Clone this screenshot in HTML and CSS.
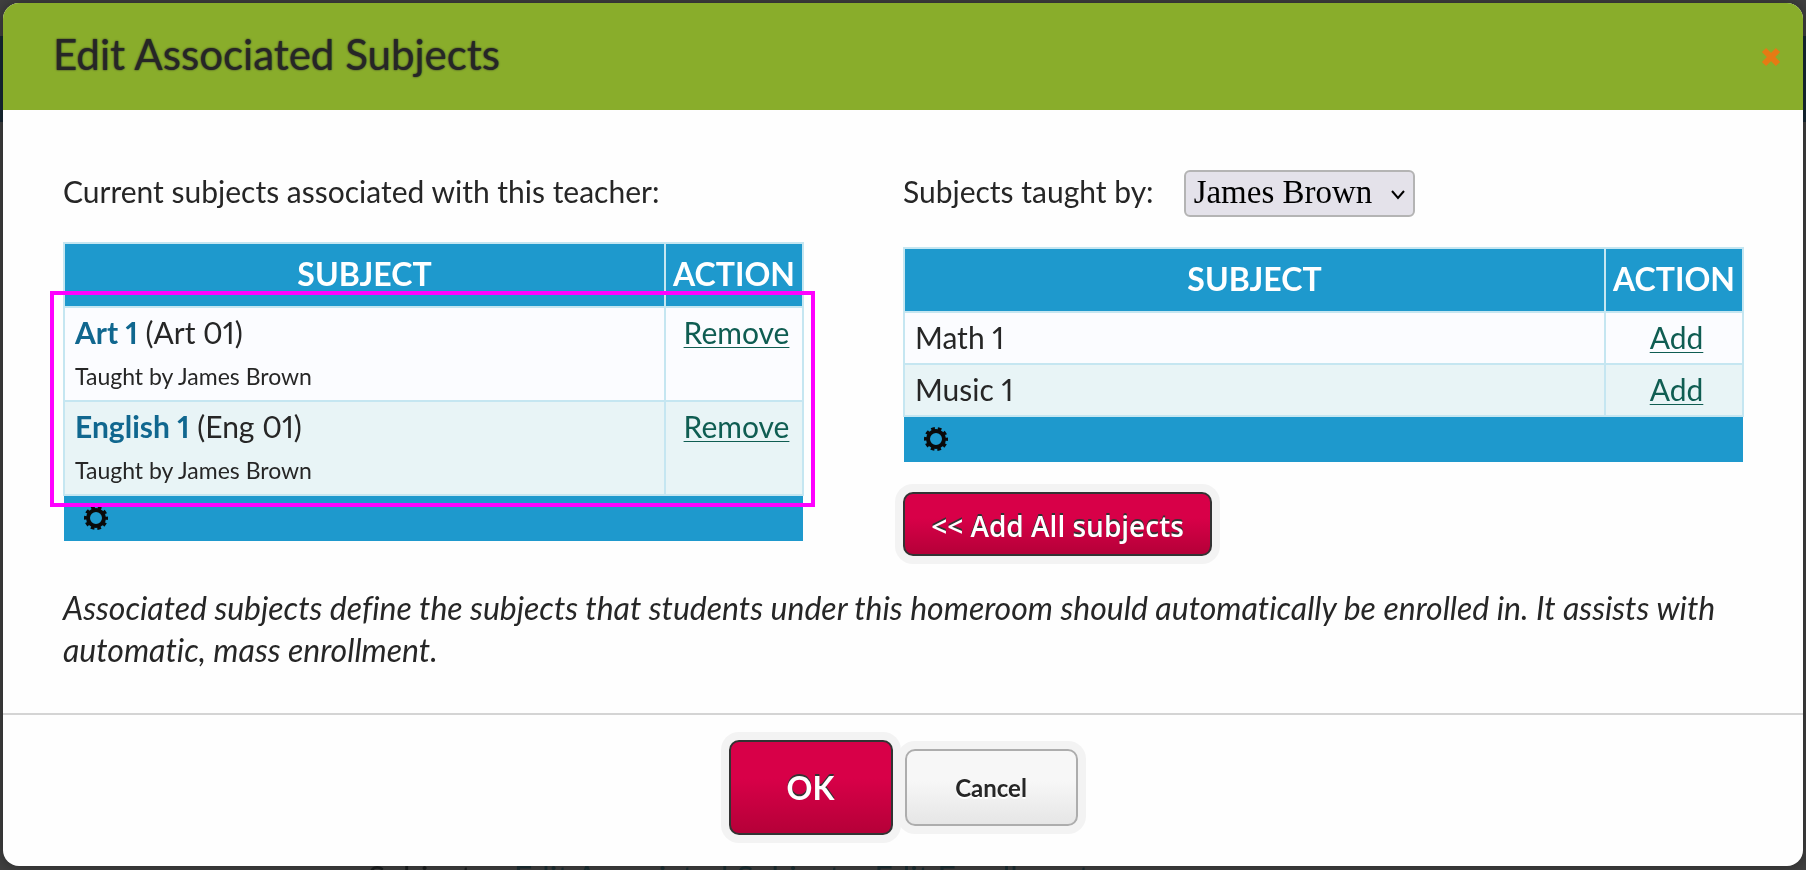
FILE: index.html
```html
<!DOCTYPE html>
<html lang="en">
<head>
    <meta charset="UTF-8">
    <meta name="viewport" content="width=device-width, initial-scale=1.0">
    <title>Edit Associated Subjects</title>
    <link rel="stylesheet" href="styles.css">
</head>
<body>
    <div class="page-behind" aria-hidden="true">
        <div class="page-bar"></div>
        <div class="page-links">
            <span>Subjects:</span>
            <span class="page-link">Edit Associated Subjects</span>
            <span class="page-link">Edit Enrollment</span>
        </div>
    </div>

    <div class="modal" role="dialog" aria-labelledby="modal-title">
        <header class="modal-header">
            <h1 id="modal-title">Edit Associated Subjects</h1>
            <button class="close" aria-label="Close">
                <svg width="22" height="22" viewBox="0 0 22 22"><path d="M4 4L18 18M18 4L4 18" stroke="#e67a14" stroke-width="6"/></svg>
            </button>
        </header>

        <main class="modal-body">
            <div class="columns">
                <section class="current">
                    <p class="intro">Current subjects associated with this teacher:</p>
                    <div class="table-wrap">
                        <table>
                            <thead>
                                <tr><th>SUBJECT</th><th class="action">ACTION</th></tr>
                            </thead>
                            <tbody>
                                <tr>
                                    <td><b>Art 1</b> (Art 01)<small>Taught by James Brown</small></td>
                                    <td class="action"><a href="#">Remove</a></td>
                                </tr>
                                <tr>
                                    <td><b>English 1</b> (Eng 01)<small>Taught by James Brown</small></td>
                                    <td class="action"><a href="#">Remove</a></td>
                                </tr>
                            </tbody>
                            <tfoot>
                                <tr>
                                    <td colspan="2">
                                        <svg class="gear" width="24" height="24" viewBox="0 0 24 24"><circle cx="12" cy="12" r="8" fill="none" stroke="#0a0a0a" stroke-width="4"/><circle cx="12" cy="12" r="10.200" fill="none" stroke="#0a0a0a" stroke-width="3.600" stroke-dasharray="3.560 2.850" stroke-dashoffset="1.780"/></svg>
                                    </td>
                                </tr>
                            </tfoot>
                        </table>
                        <div class="highlight"></div>
                    </div>
                </section>

                <section class="available">
                    <div class="intro">
                        <label for="teacher">Subjects taught by:</label>
                        <div class="select-wrap">
                            <select id="teacher"><option>James Brown</option></select>
                            <svg class="chevron" width="16" height="12" viewBox="0 0 16 12"><path d="M2 2L8 9L14 2" fill="none" stroke="#000" stroke-width="2"/></svg>
                        </div>
                    </div>
                    <div class="table-wrap">
                        <table>
                            <thead>
                                <tr><th>SUBJECT</th><th class="action">ACTION</th></tr>
                            </thead>
                            <tbody>
                                <tr><td>Math 1</td><td class="action"><a href="#">Add</a></td></tr>
                                <tr><td>Music 1</td><td class="action"><a href="#">Add</a></td></tr>
                            </tbody>
                            <tfoot>
                                <tr>
                                    <td colspan="2">
                                        <svg class="gear" width="24" height="24" viewBox="0 0 24 24"><circle cx="12" cy="12" r="8" fill="none" stroke="#0a0a0a" stroke-width="4"/><circle cx="12" cy="12" r="10.200" fill="none" stroke="#0a0a0a" stroke-width="3.600" stroke-dasharray="3.560 2.850" stroke-dashoffset="1.780"/></svg>
                                    </td>
                                </tr>
                            </tfoot>
                        </table>
                    </div>
                    <button class="btn btn-red add-all">&lt;&lt; Add All subjects</button>
                </section>
            </div>

            <p class="note">Associated subjects define the subjects that students under this homeroom should automatically be enrolled in. It assists with automatic, mass enrollment.</p>
        </main>

        <footer class="modal-footer">
            <button class="btn btn-red ok">OK</button>
            <button class="btn cancel">Cancel</button>
        </footer>
    </div>
</body>
</html>
```
FILE: styles.css
```css
* {
    box-sizing: border-box;
}

body {
    font-family: Lato, 'Liberation Sans', sans-serif;
    font-size: 30px;
    line-height: 42px;
    font-variant-ligatures: none;
    font-variant-numeric: proportional-nums;
    color: #262626;
    background: #414141;
    margin: 0;
    padding: 3px 3px 4px;
    min-height: 100vh;
    display: flex;
}

/* dimmed page under the dialog */
.page-behind {
    position: fixed;
    inset: 0;
    overflow: hidden;
}

.page-bar {
    height: 86px;
    margin-top: 36px;
    background: #182a35;
}

.page-links {
    position: absolute;
    left: 368px;
    bottom: -29px;
    display: flex;
    gap: 20px;
    color: #1c1f20;
    font-size: 32px;
    white-space: nowrap;
}

.page-link {
    color: #1d3034;
}

.modal {
    position: relative;
    flex: 1;
    display: flex;
    flex-direction: column;
    background: #fefefe;
    border-radius: 16px;
    box-shadow: 0 0 16px rgba(0, 0, 0, 0.4);
    overflow: hidden;
}

.modal-header {
    display: flex;
    justify-content: space-between;
    align-items: center;
    height: 107px;
    padding: 0 21px 0 50px;
    background: #89ad2b;
}

h1 {
    margin: 0;
    padding-bottom: 6px;
    font-size: 42px;
    line-height: 50px;
    font-weight: normal;
    text-shadow: 0 0 2px #262626;
}

.close {
    display: flex;
    padding: 0;
    border: none;
    background: none;
}

.modal-body {
    flex: 1;
    padding: 60px 59px 0 60px;
}

.columns {
    display: grid;
    grid-template-columns: 741fr 841fr;
    gap: 99px;
}

.intro {
    display: flex;
    align-items: flex-start;
    gap: 30px;
    margin: 0;
    height: 47px;
}

.table-wrap {
    position: relative;
    margin-top: 25px;
}

.available .table-wrap {
    margin-top: 30px;
}

table {
    width: 100%;
    border-collapse: collapse;
    table-layout: fixed;
}

th, td {
    border: 2px solid #c5e6f1;
    vertical-align: top;
}

th {
    height: 64px;
    padding: 0 0 3px;
    background: #1e99cd;
    color: white;
    font-size: 32px;
    vertical-align: middle;
}

td {
    padding: 3px 10px 5px;
    background: #fbfcff;
}

tbody tr:nth-child(2) td {
    background: #e8f4f6;
}

.action {
    width: 138px;
    text-align: center;
}

td.action {
    padding-left: 12px;
    padding-right: 7px;
}

td b {
    color: #10678f;
}

small {
    display: block;
    margin: 2px 0 -2px;
    font-size: 23px;
}

a {
    color: #0f5d52;
    text-decoration-thickness: 1px;
    text-underline-offset: 3px;
}

tfoot td {
    height: 46px;
    padding: 10px 20px;
    border: none;
    border-top: 2px solid #c5e6f1;
    background: #1e99cd;
}

.gear {
    display: block;
}

.highlight {
    position: absolute;
    top: 49px;
    left: -13px;
    right: -11px;
    height: 216px;
    border: 4px solid #ff00ff;
}

.select-wrap {
    position: relative;
}

select {
    display: block;
    appearance: none;
    width: 231px;
    height: 47px;
    padding: 0 8px 4px;
    border: 2px solid #b4b4b4;
    border-radius: 6px;
    background: #e4e2ea;
    color: black;
    font-family: 'Liberation Serif', serif;
    font-size: 33px;
}

.chevron {
    position: absolute;
    right: 9px;
    top: 19px;
}

.btn {
    border: 2px solid #adadad;
    border-radius: 10px;
    background: linear-gradient(#f7f7f7 40%, #e6e6e6);
    box-shadow: 0 0 0 8px #f3f3f3;
    color: #262626;
    font-family: inherit;
    font-weight: bold;
    text-shadow: 0 2px 0 white;
}

.btn-red {
    border-color: #333;
    background: linear-gradient(#d80048 40%, #b50038);
    color: white;
    text-shadow: 0 -2px 0 #333;
}

.add-all {
    width: 309px;
    height: 64px;
    margin-top: 30px;
    padding-top: 4px;
    font-family: 'Open Sans', sans-serif;
    font-weight: 600;
    font-size: 28px;
}

.note {
    margin: 31px 0 0;
    font-size: 32px;
    font-style: italic;
}

.modal-footer {
    display: flex;
    justify-content: center;
    align-items: center;
    gap: 12px;
    height: 153px;
    padding-bottom: 6px;
    border-top: 2px solid #d4d4d4;
}

.ok {
    width: 164px;
    height: 95px;
    font-size: 32px;
}

.cancel {
    width: 173px;
    height: 77px;
    font-size: 24px;
}
```
